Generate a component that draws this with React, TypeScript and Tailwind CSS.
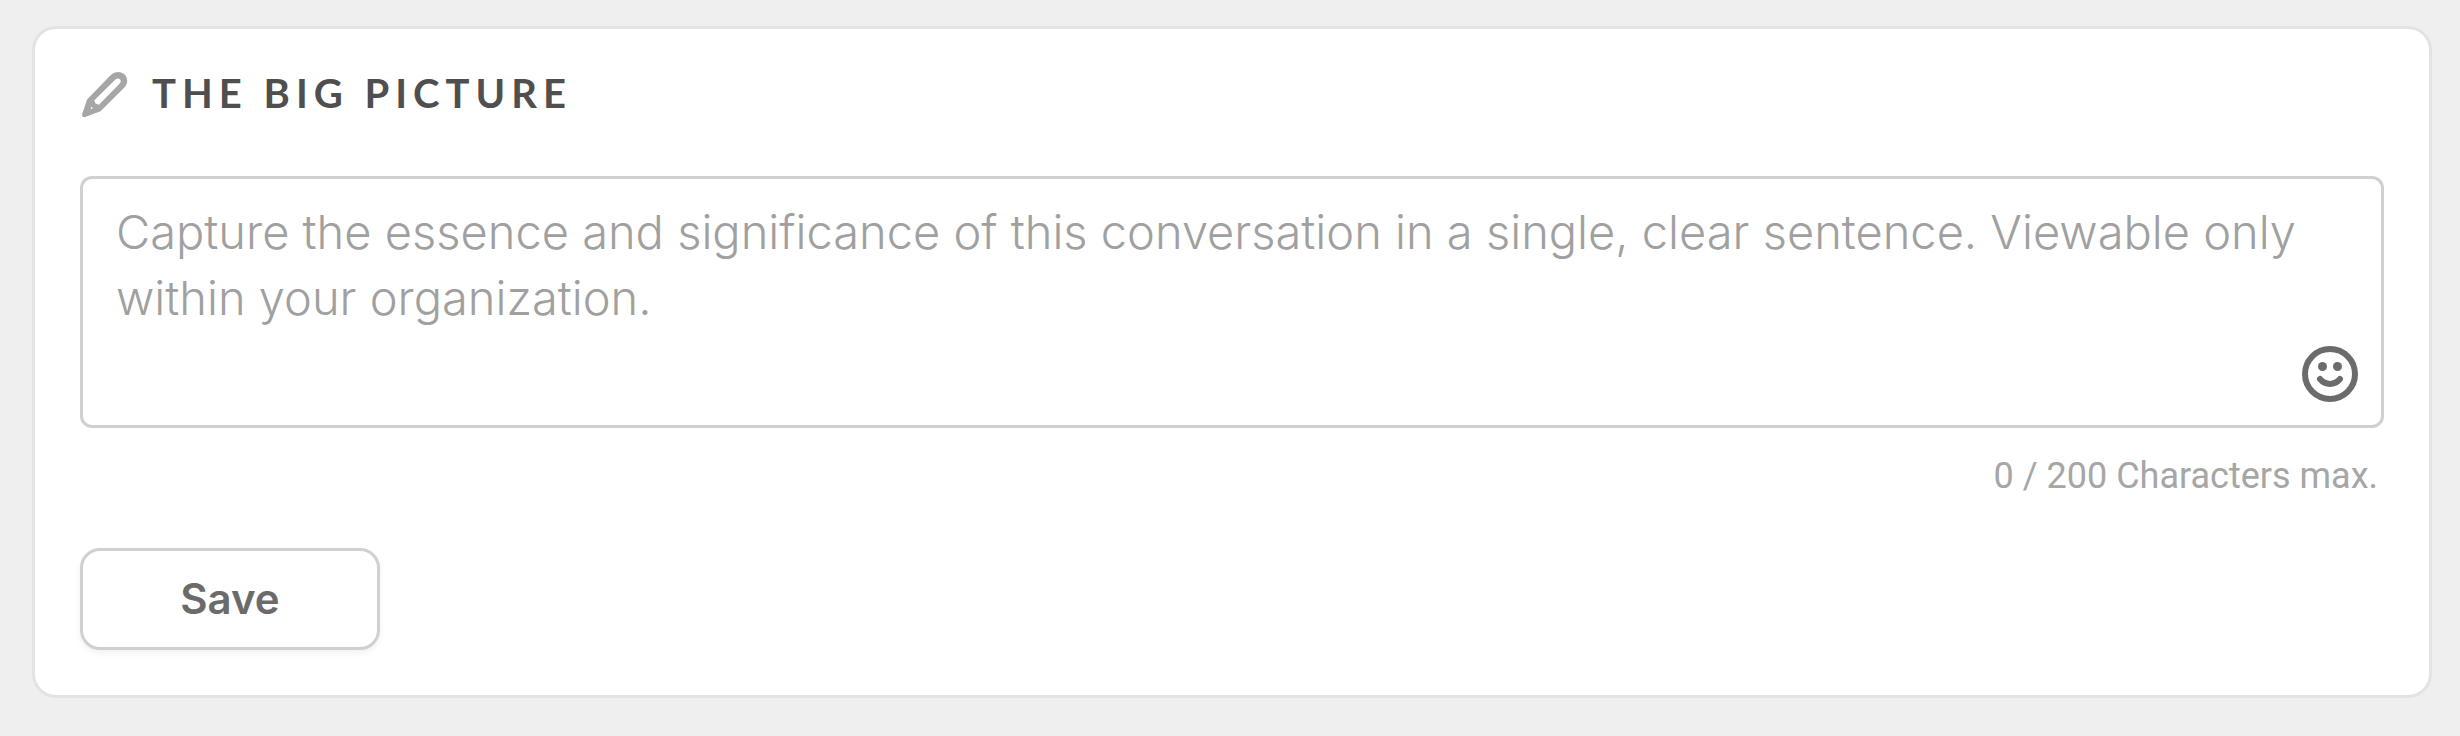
import { useState } from "react";

const MAX_CHARACTERS = 200;

function PencilIcon() {
  return (
    <svg
      className="h-12 w-12 shrink-0 fill-[#a6a6a6]"
      viewBox="0 0 48 48"
      aria-hidden="true"
    >
      <path
        fillRule="evenodd"
        d="M30.800 5C33 2.900 35.600 2 38.300 2C43.300 2 47.200 5.800 47.200 10.700C47.200 13.500 46 15.900 43.900 18L21 40.700C20.400 41.200 19.800 41.600 19.200 41.800L5.200 46.900C3.200 47.500 1.500 46 2.200 43.900L6.800 30.200C7 29.500 7.500 28.900 8 28.400ZM35.400 9.600L14.200 30.500L15.500 33.600L18.900 34.700L39.500 13.800C41 12.300 41.200 10.600 39.900 9.300C38.500 8 36.800 8.200 35.400 9.600ZM11.300 36.600L10.700 38.900L13 38.200Z"
      />
    </svg>
  );
}

function SmileIcon() {
  return (
    <svg className="h-14 w-14" viewBox="0 0 56 56" fill="none" aria-hidden="true">
      <circle cx="28" cy="28" r="25" stroke="currentColor" strokeWidth="6" />
      <circle cx="20.500" cy="20.500" r="4.500" fill="currentColor" />
      <circle cx="35.500" cy="20.500" r="4.500" fill="currentColor" />
      <path
        d="M18 33C23.500 39.500 32.500 39.500 38 33"
        stroke="currentColor"
        strokeWidth="6"
        strokeLinecap="round"
      />
    </svg>
  );
}

function App() {
  const [text, setText] = useState("");

  return (
    <main className="min-h-screen bg-[#efefef] pt-[26px] pr-7 pb-[38px] pl-8">
      <form
        className="rounded-[24px] border-[3px] border-[#e3e3e3] bg-white px-[45px] pt-[41px] pb-[45px]"
        onSubmit={(e) => e.preventDefault()}
      >
        <div className="flex items-start gap-6">
          <PencilIcon />
          <label
            htmlFor="big-picture"
            className="font-['Lato',sans-serif] text-[40px] leading-[46px] font-bold tracking-[6px] text-[#4f4f4f] uppercase"
          >
            The Big Picture
          </label>
        </div>

        <div className="relative mt-[58px]">
          <textarea
            id="big-picture"
            className="block h-[252px] w-full resize-none rounded-[12px] border-[3px] border-[#d0d0d0] px-[33px] py-5 font-['Inter',sans-serif] text-[47px] leading-[66px] font-light text-[#4f4f4f] outline-none placeholder:text-[#a0a0a0]"
            placeholder="Capture the essence and significance of this conversation in a single, clear sentence. Viewable only within your organization."
            maxLength={MAX_CHARACTERS}
            value={text}
            onChange={(e) => setText(e.target.value)}
          />
          <button
            type="button"
            aria-label="Add emoji"
            className="absolute right-[26px] bottom-[26px] text-[#6b6b6b]"
          >
            <SmileIcon />
          </button>
        </div>

        <p className="mt-6 pr-[6px] text-right font-['Roboto',sans-serif] text-[36px] leading-[48px] text-[#a6a6a6]">
          {text.length} / {MAX_CHARACTERS} Characters max.
        </p>

        <button
          type="submit"
          className="mt-12 block h-[102px] w-[300px] rounded-[20px] border-[3px] border-[#d0d0d0] bg-white font-['Inter',sans-serif] text-[42px] leading-[48px] font-semibold text-[#6b6b6b] shadow-[0_3px_6px_rgba(0,0,0,0.06)]"
        >
          Save
        </button>
      </form>
    </main>
  );
}

export default App;
